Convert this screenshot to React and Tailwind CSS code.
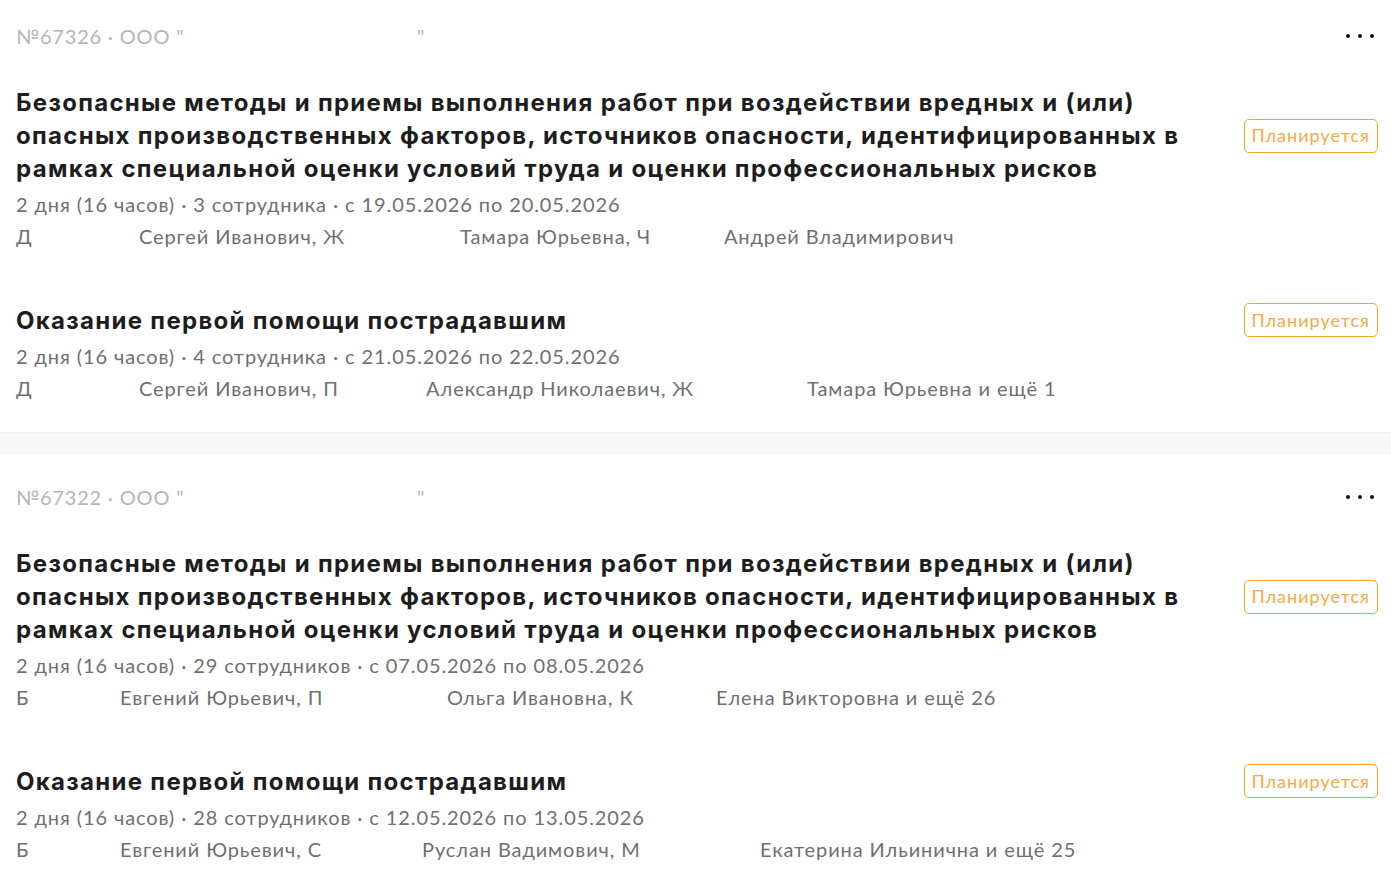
import React from "react";

const FONT = { fontFamily: '"Lato", "Noto Sans", sans-serif' };
const TITLE_FONT = { fontFamily: '"Inter", "Noto Sans", sans-serif' };

const cards = [
  {
    num: "№67326",
    pt: "pt-[24px]",
    courses: [
      {
        title:
          "Безопасные методы и приемы выполнения работ при воздействии вредных и (или) опасных производственных факторов, источников опасности, идентифицированных в рамках специальной оценки условий труда и оценки профессиональных рисков",
        meta: "2 дня (16 часов) · 3 сотрудника · с 19.05.2026 по 20.05.2026",
        names: [
          ["Д", "w-[123px]"],
          ["Сергей Иванович, Ж", "w-[321px]"],
          ["Тамара Юрьевна, Ч", "w-[264px]"],
          ["Андрей Владимирович", ""],
        ],
      },
      {
        title: "Оказание первой помощи пострадавшим",
        meta: "2 дня (16 часов) · 4 сотрудника · с 21.05.2026 по 22.05.2026",
        names: [
          ["Д", "w-[123px]"],
          ["Сергей Иванович, П", "w-[287px]"],
          ["Александр Николаевич, Ж", "w-[381px]"],
          ["Тамара Юрьевна и ещё 1", ""],
        ],
      },
    ],
  },
  {
    num: "№67322",
    pt: "pt-[30px]",
    courses: [
      {
        title:
          "Безопасные методы и приемы выполнения работ при воздействии вредных и (или) опасных производственных факторов, источников опасности, идентифицированных в рамках специальной оценки условий труда и оценки профессиональных рисков",
        meta: "2 дня (16 часов) · 29 сотрудников · с 07.05.2026 по 08.05.2026",
        names: [
          ["Б", "w-[104px]"],
          ["Евгений Юрьевич, П", "w-[327px]"],
          ["Ольга Ивановна, К", "w-[269px]"],
          ["Елена Викторовна и ещё 26", ""],
        ],
      },
      {
        title: "Оказание первой помощи пострадавшим",
        meta: "2 дня (16 часов) · 28 сотрудников · с 12.05.2026 по 13.05.2026",
        names: [
          ["Б", "w-[104px]"],
          ["Евгений Юрьевич, С", "w-[302px]"],
          ["Руслан Вадимович, М", "w-[338px]"],
          ["Екатерина Ильинична и ещё 25", ""],
        ],
      },
    ],
  },
];

function Course({ c, first }) {
  return (
    <div className={first ? "mt-[38px]" : "mt-[51px]"}>
      <div className="flex items-center gap-4">
        <h2
          className="flex-1 text-[24px] leading-[33px] font-bold text-[#1d1d1d] tracking-[1.3px]"
          style={TITLE_FONT}
        >
          {c.title}
        </h2>
        <span className="shrink-0 rounded-[5px] border border-[#f5a623] px-[7px] h-[34px] flex items-center text-[18px] text-[#f8a845] tracking-[1px]">
          Планируется
        </span>
      </div>
      <div className="mt-[3px] text-[20px] leading-[32px] text-[#6f6f6f] tracking-[0.9px]">
        {c.meta}
      </div>
      <div className="flex text-[20px] leading-[32px] text-[#6f6f6f] whitespace-nowrap tracking-[0.9px]">
        {c.names.map(([n, w], i) => (
          <span key={i} className={`shrink-0 ${w}`}>
            {n}
          </span>
        ))}
      </div>
    </div>
  );
}

function Card({ card }) {
  return (
    <div className={`bg-white pl-[16px] pr-[13px] ${card.pt} pb-[28px]`}>
      <div className="flex items-center h-[24px] text-[20px] text-[#b5b5b5] tracking-[0.8px]">
        <span className="w-[401px] shrink-0">{card.num} · ООО "</span>
        <span>"</span>
        <div className="ml-auto mr-[4px] flex items-center gap-[8px]">
          <span className="w-[4px] h-[4px] rounded-full bg-[#111]" />
          <span className="w-[4px] h-[4px] rounded-full bg-[#111]" />
          <span className="w-[4px] h-[4px] rounded-full bg-[#111]" />
        </div>
      </div>
      {card.courses.map((c, i) => (
        <Course key={i} c={c} first={i === 0} />
      ))}
    </div>
  );
}

export default function App() {
  return (
    <div className="min-h-screen bg-white" style={FONT}>
      <Card card={cards[0]} />
      <div className="h-[23px] bg-[#f7f7f7] border-t border-[#efefef]" />
      <Card card={cards[1]} />
    </div>
  );
}
